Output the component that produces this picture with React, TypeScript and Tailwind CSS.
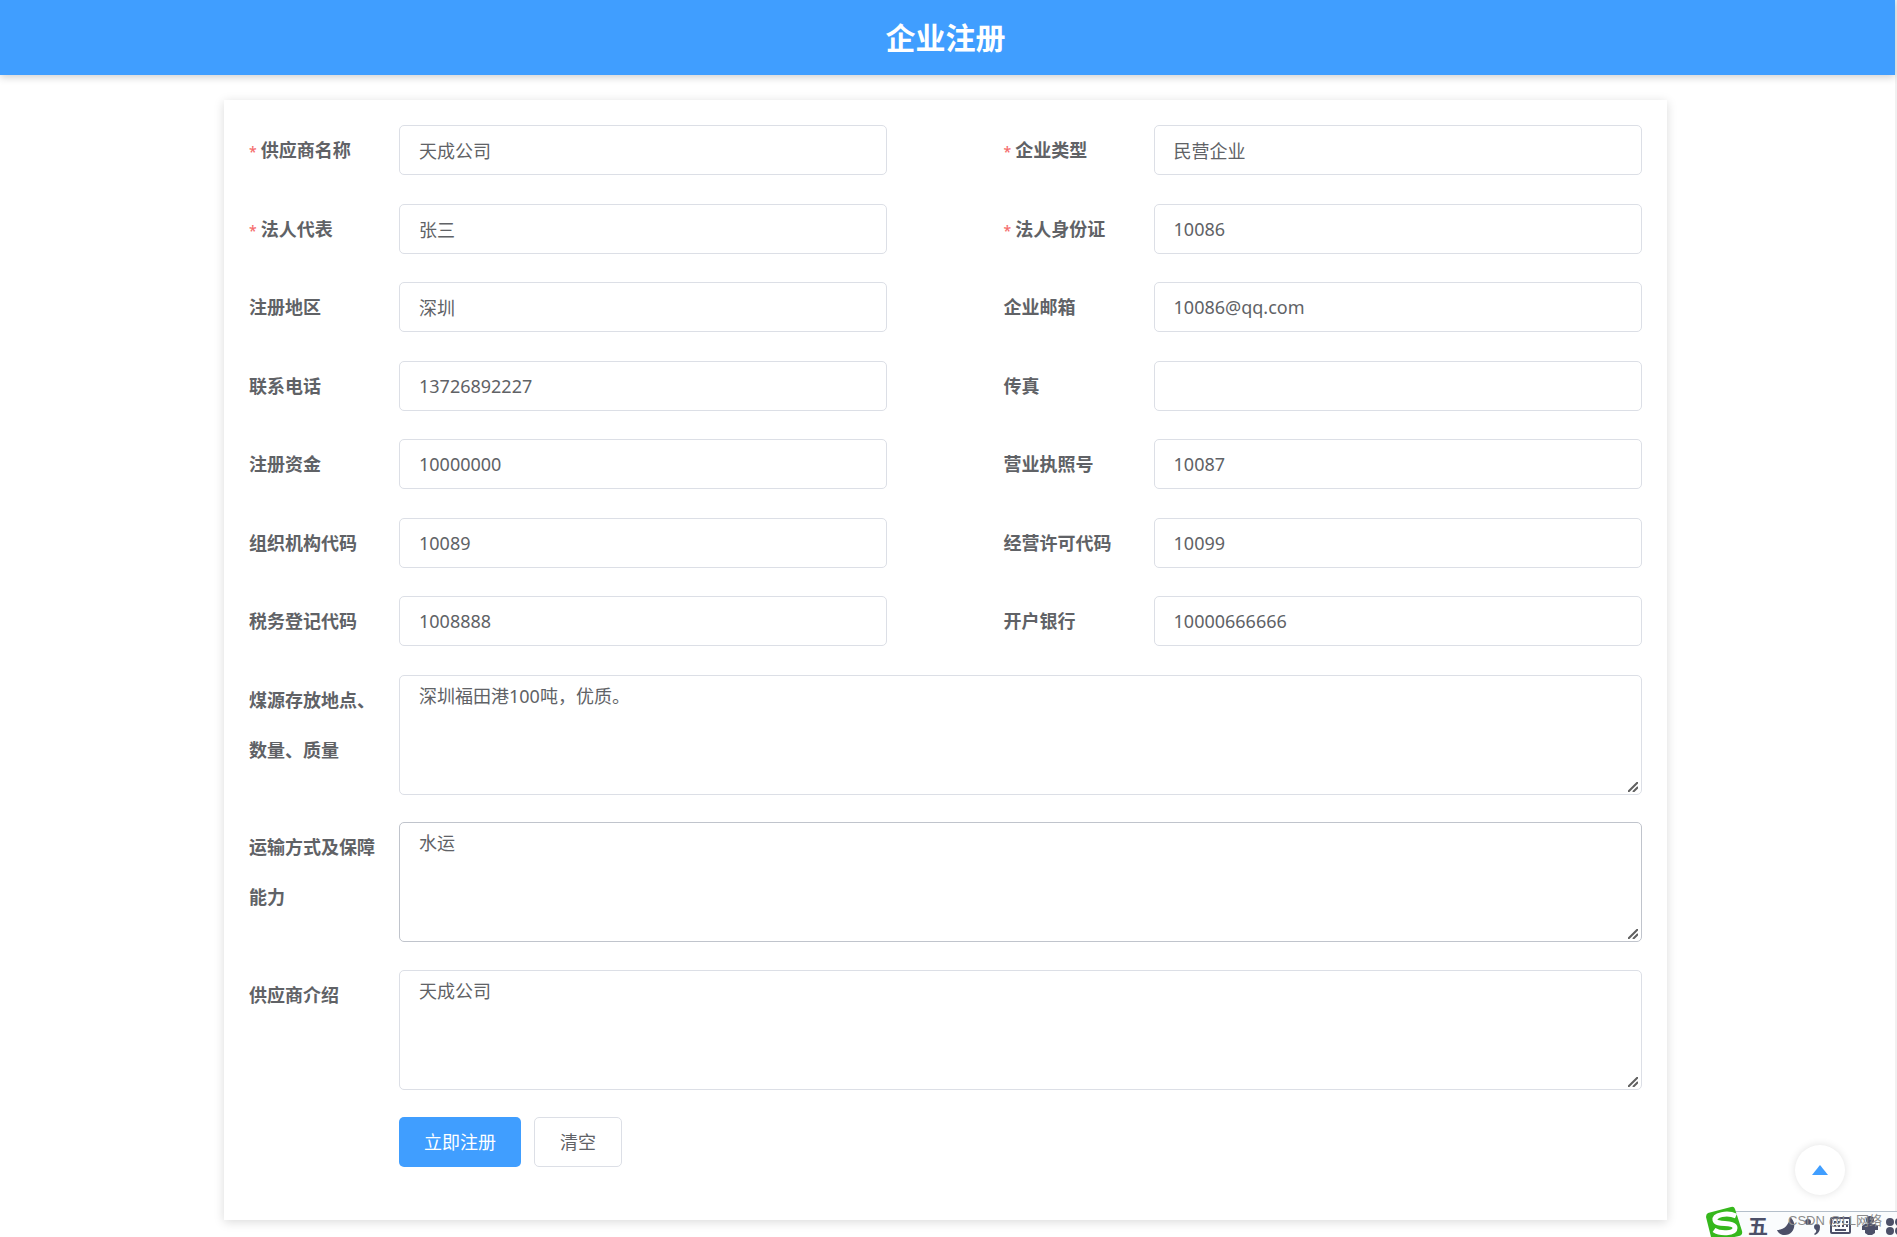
import React, { FC, useState } from 'react'

interface Field {
	id: string;
	label: string;
	value: string;
	required?: boolean;
}

const rows: Field[][] = [
	[
		{ id: 'name', label: '供应商名称', value: '天成公司', required: true },
		{ id: 'type', label: '企业类型', value: '民营企业', required: true },
	],
	[
		{ id: 'legalPerson', label: '法人代表', value: '张三', required: true },
		{ id: 'legalId', label: '法人身份证', value: '10086', required: true },
	],
	[
		{ id: 'area', label: '注册地区', value: '深圳' },
		{ id: 'email', label: '企业邮箱', value: '10086@qq.com' },
	],
	[
		{ id: 'phone', label: '联系电话', value: '13726892227' },
		{ id: 'fax', label: '传真', value: '' },
	],
	[
		{ id: 'capital', label: '注册资金', value: '10000000' },
		{ id: 'license', label: '营业执照号', value: '10087' },
	],
	[
		{ id: 'orgCode', label: '组织机构代码', value: '10089' },
		{ id: 'permitCode', label: '经营许可代码', value: '10099' },
	],
	[
		{ id: 'taxCode', label: '税务登记代码', value: '1008888' },
		{ id: 'bank', label: '开户银行', value: '10000666666' },
	],
]

const areas: Field[] = [
	{ id: 'storage', label: '煤源存放地点、数量、质量', value: '深圳福田港100吨，优质。' },
	{ id: 'transport', label: '运输方式及保障能力', value: '水运' },
	{ id: 'intro', label: '供应商介绍', value: '天成公司' },
]

const initial: Record<string, string> = {}
;[...rows.flat(), ...areas].forEach((f) => {
	initial[f.id] = f.value
})
const empty = Object.fromEntries(Object.keys(initial).map((id) => [id, '']))

const Label: FC<{ field: Field }> = ({ field }) => (
	<label htmlFor={field.id} className="w-[150px] shrink-0 pr-[15px] font-bold leading-[50px]">
		{field.required && <span className="mr-1 text-sm font-medium text-[#f56c6c]">*</span>}
		{field.label}
	</label>
)

// input method toolbar with the watermark over it
const ImeBar = () => (
	<div className="absolute bottom-0 right-0 h-[34px] w-[191px] overflow-hidden">
		<div className="absolute bottom-0 right-0 h-[26px] w-[165px] border-t border-[#b4bfca] bg-[#fafcfd]" />
		<svg className="absolute inset-0" width="191" height="34" viewBox="0 0 191 34">
			<path d="M2 10 L25 4 Q28 3 29 6 L36 28 Q37 32 33 33 L10 38 Q6 38 5 34 L0 14 Q0 11 2 10Z" fill="#36b81c" />
			<path d="M30 13 C21 9 8 12 9 17 C10 23 29 18 29 25 C29 31 14 31 8 27" fill="none" stroke="#fff" strokeWidth="5" />
			<g fill="#4c5068">
				<path d="M84 14 C92 20 88 32 79 32 C75 32 72 30 71 27 C78 27 83 22 84 14Z" />
				<circle cx="102" cy="19" r="3" />
				<path d="M108 24 a3 3 0 0 1 6 0 q0 6 -5 8 l-1 -1 q3 -2 2 -4 q-2 -1 -2 -3Z" />
				<circle cx="164" cy="17" r="4" />
				<path d="M159 21 h10 l3 2 v4 h-3 v3 l-3 2 h-4 l-3 -2 v-3 h-3 v-4Z" />
				<circle cx="184" cy="19" r="4" />
				<circle cx="184" cy="28" r="4" />
				<circle cx="193" cy="19" r="4" />
				<circle cx="193" cy="28" r="4" />
			</g>
			<g fill="none" stroke="#4c5068" strokeWidth="2">
				<rect x="125" y="15" width="19" height="15" rx="1" />
				<path d="M128 19 h14 M128 23 h14" strokeDasharray="2 2" />
				<path d="M129 27 h11" />
			</g>
		</svg>
		<span className="absolute bottom-0 left-[42px] text-xl font-bold leading-5 text-[#4c5068]">五</span>
		<span className="absolute left-[82px] top-[7px] whitespace-nowrap font-['Liberation_Sans','Noto_Sans_CJK_SC',sans-serif] text-[13px] leading-[22px] text-[#8c8c8c]">
			CSDN @LL网络
		</span>
	</div>
)

const App = () => {
	const [form, setForm] = useState(initial)

	const handleChange = (e: React.ChangeEvent<HTMLInputElement | HTMLTextAreaElement>) => {
		setForm({ ...form, [e.target.id]: e.target.value })
	}

	return (
		<div className="relative overflow-hidden font-['Noto_Sans','Noto_Sans_CJK_SC',sans-serif] text-lg text-[#606266]">
			<div className="min-h-screen border-r-2 border-[#f1f1f1] bg-white">
				<header className="bg-[#409eff] pr-1 text-center shadow-[0_2px_8px_rgba(0,0,0,0.2)]">
					<h1 className="text-[30px] font-bold leading-[75px] text-white">企业注册</h1>
				</header>
				<main className="pr-1 pt-[25px]">
					<form
						onSubmit={(e) => e.preventDefault()}
						className="mx-auto w-full max-w-[1443px] p-[25px] shadow-[0_2px_10px_rgba(0,0,0,0.15)]"
					>
						{rows.map((row) => (
							<div key={row[0].id} className="flex h-[51px] items-start justify-between odd:mb-7 even:mb-[27px]">
								{row.map((field) => (
									<div key={field.id} className="flex w-11/24">
										<Label field={field} />
										<input
											id={field.id}
											value={form[field.id]}
											onChange={handleChange}
											className="h-[50px] w-full min-w-0 rounded-[5px] border border-[#dcdfe6] px-[19px] outline-none"
										/>
									</div>
								))}
							</div>
						))}
						{areas.map((field) => (
							<div key={field.id} className="relative flex h-[120px] odd:mb-7 even:mb-[27px]">
								<Label field={field} />
								<textarea
									id={field.id}
									value={form[field.id]}
									onChange={handleChange}
									className={`w-full min-w-0 resize-none rounded-[5px] border px-[19px] py-1.5 leading-7 outline-none ${field.id === 'transport' ? 'border-[#c0c4cc]' : 'border-[#dcdfe6]'}`}
								/>
								<svg className="absolute bottom-[3px] right-1" width="10" height="10" viewBox="0 0 10 10">
									<path d="M0 10 L10 0 M5 10 L10 5" stroke="#606060" strokeWidth="2" />
								</svg>
							</div>
						))}
						<div className="mb-7 flex gap-[13px] pl-[150px]">
							<button type="submit" className="h-[50px] rounded-[5px] bg-[#409eff] px-[25px] text-white">
								立即注册
							</button>
							<button
								type="button"
								onClick={() => setForm(empty)}
								className="h-[50px] rounded-[5px] border border-[#dcdfe6] px-[25px]"
							>
								清空
							</button>
						</div>
					</form>
				</main>
			</div>
			<button
				type="button"
				aria-label="回到顶部"
				className="absolute bottom-[42px] right-[52px] flex size-[50px] items-center justify-center rounded-full bg-white shadow-[0_0_8px_rgba(0,0,0,0.12)]"
			>
				<svg width="16" height="10" viewBox="0 0 16 10">
					<path d="M8 0 L16 10 H0Z" fill="#409eff" />
				</svg>
			</button>
			<ImeBar />
		</div>
	)
}

export default App
